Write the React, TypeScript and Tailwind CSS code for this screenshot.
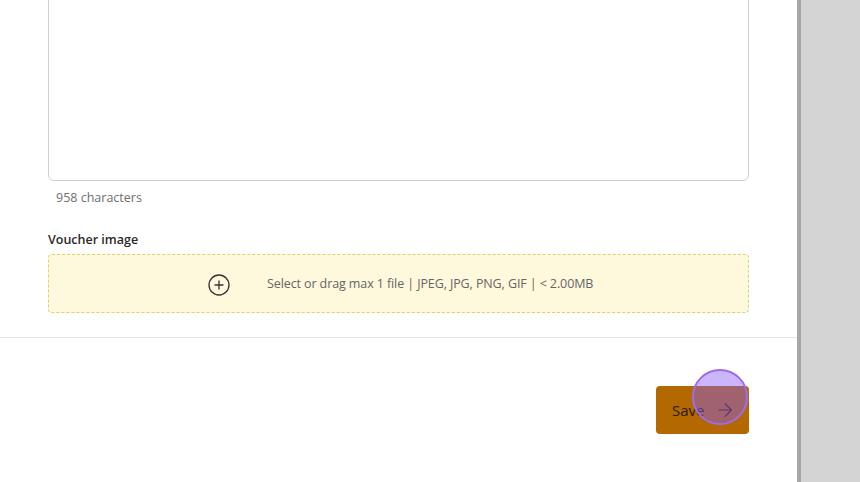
import {ArrowRight, PlusCircle} from 'lucide-react';

export default function App() {
    return (
        <div
            className="flex h-[482px] w-[860px] overflow-hidden bg-[#d4d4d4]"
            style={{fontFamily: '"Open Sans", "Noto Sans", sans-serif'}}
        >
            <main className="flex w-[797px] flex-col bg-white">
                <div className="px-12">
                    {/* textarea, scrolled so its top is out of view */}
                    <div className="mt-[-20px] h-[201px] rounded-md border border-[#d0d0d0] bg-white" />
                    <p className="mt-[8px] pl-2 text-[12.5px] leading-[18px] text-[#6f6f6f]">958 characters</p>

                    <label className="mt-[24px] block text-[12.5px] font-semibold leading-[18px] text-[#2a2a2a]">
                        Voucher image
                    </label>
                    <div className="mt-[5px] flex h-[59px] items-center rounded border border-dashed border-[#e3cf72] bg-[#fef8dc] pl-[158px] pt-[2px]">
                        <PlusCircle className="h-[24px] w-[24px] text-[#333]" strokeWidth={1.3} />
                        <span className="ml-[36px] text-[12.5px] tracking-[-0.1px] text-[#666]">
                            Select or drag max 1 file | JPEG, JPG, PNG, GIF | &lt; 2.00MB
                        </span>
                    </div>
                </div>

                <div className="mt-[24px] border-t border-[#e6e6e6]" />

                <div className="flex justify-end px-12 pt-[48px]">
                    <div className="relative">
                        <button className="flex h-[48px] w-[93px] items-center gap-[10px] rounded bg-[#b36800] pl-[16px] text-[15px] text-[#2a1a05]">
                            Save
                            <ArrowRight className="h-[22px] w-[22px]" strokeWidth={1.3} />
                        </button>
                        {/* click indicator */}
                        <div className="absolute left-[36px] top-[-17px] h-[56px] w-[56px] rounded-full border-2 border-[#9d6cf0] bg-[#8b5cf6]/45" />
                    </div>
                </div>
            </main>
            <div className="w-[4px] bg-[#a6a6a6]" />
        </div>
    );
}
